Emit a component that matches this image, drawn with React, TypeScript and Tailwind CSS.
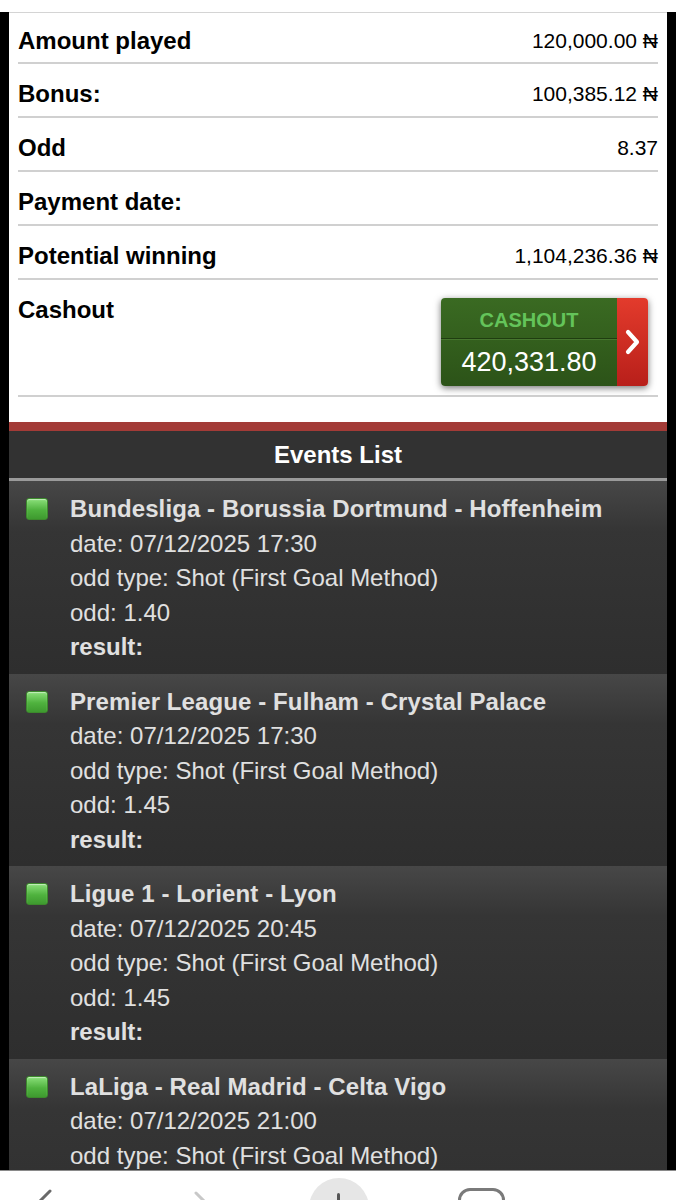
import React from "react";

const font = { fontFamily: '"Liberation Sans", Arial, Helvetica, sans-serif' };

type Row = { label: string; value: string };
const rows: Row[] = [
  { label: "Amount played", value: "120,000.00 ₦" },
  { label: "Bonus:", value: "100,385.12 ₦" },
  { label: "Odd", value: "8.37" },
  { label: "Payment date:", value: "" },
  { label: "Potential winning", value: "1,104,236.36 ₦" },
];

const events = [
  { title: "Bundesliga - Borussia Dortmund - Hoffenheim", date: "07/12/2025 17:30", odd: "1.40" },
  { title: "Premier League - Fulham - Crystal Palace", date: "07/12/2025 17:30", odd: "1.45" },
  { title: "Ligue 1 - Lorient - Lyon", date: "07/12/2025 20:45", odd: "1.45" },
  { title: "LaLiga - Real Madrid - Celta Vigo", date: "07/12/2025 21:00", odd: "1.45" },
];

function CashoutButton() {
  return (
    <div className="flex h-[88px] w-[207px] rounded-[4px] overflow-hidden shadow-[0_2px_7px_rgba(0,0,0,0.55)]">
      <div className="flex w-[176px] flex-col bg-[linear-gradient(to_bottom,#3a6a22,#2c5318)]">
        <div className="flex h-[41px] items-center justify-center border-b border-[#1f3d10] text-[20px] font-bold text-[#64c45a] leading-none pt-[4px]">
          CASHOUT
        </div>
        <div className="flex flex-1 items-center justify-center border-t border-[#46762e] text-[27px] text-white leading-none pb-[2px]">
          420,331.80
        </div>
      </div>
      <div className="flex flex-1 items-center justify-center bg-[linear-gradient(to_bottom,#e33b2c,#b81f1a)]">
        <svg width="18" height="26" viewBox="0 0 18 26">
          <path d="M4 3 L13 13 L4 23" fill="none" stroke="#fff" strokeWidth="4.2" strokeLinecap="round" strokeLinejoin="round" />
        </svg>
      </div>
    </div>
  );
}

function EventItem({ title, date, odd }: { title: string; date: string; odd: string }) {
  return (
    <div className="flex bg-[linear-gradient(to_bottom,#474747_0px,#353535_50px,#2e2e2e_100%)] pt-[11px] pb-[9px] text-[24px] leading-[34.5px] text-[#e0e0e0]">
      <div className="w-[61px] shrink-0 pl-[17px] pt-[6px]">
        <div className="h-[22px] w-[22px] rounded-[3px] border border-[#3c8a2c] bg-[linear-gradient(to_bottom,#8be07a,#4fb23e_55%,#3e9a2f)] shadow-[inset_0_1px_1px_rgba(255,255,255,0.5)]" />
      </div>
      <div className="flex flex-col">
        <div className="font-bold tracking-[0.1px]">{title}</div>
        <div>date: {date}</div>
        <div>odd type: Shot (First Goal Method)</div>
        <div>odd: {odd}</div>
        <div className="font-bold">result:</div>
      </div>
    </div>
  );
}

export default function App() {
  return (
    <div className="flex h-[1200px] w-[676px] flex-col overflow-hidden bg-black" style={font}>
      <div className="h-[12px] shrink-0 bg-white" />
      <div className="flex min-h-0 flex-1 flex-col overflow-hidden px-[9px] pr-[9px]">
        <div className="bg-white border-t border-[#d4d4d4] px-[9px] text-black">
          {rows.map((r, i) => (
            <div
              key={r.label}
              className={`flex justify-between border-b-2 border-[#d0d0d0] ${i === 0 ? "h-[51px] pt-[14px]" : "h-[54px] pt-[16px]"}`}
            >
              <div className="h-[28px] text-[24px] font-bold leading-[28px]">{r.label}</div>
              <div className="h-[28px] text-[21px] leading-[28px]">{r.value}</div>
            </div>
          ))}
          <div className="flex h-[117px] justify-between border-b-2 border-[#d0d0d0] pt-[16px]">
            <div className="h-[28px] text-[24px] font-bold leading-[28px]">Cashout</div>
            <div className="mr-[10px] mt-[2px]">
              <CashoutButton />
            </div>
          </div>
          <div className="h-[25px]" />
        </div>
        <div className="h-[9px] shrink-0 bg-[#a33b37]" />
        <div className="flex h-[47px] shrink-0 items-center justify-center bg-[#323232] text-[24px] font-bold text-white">
          Events List
        </div>
        <div className="h-[3px] shrink-0 bg-[#9a9a9a]" />
        <div className="flex flex-col bg-[#2e2e2e]">
          {events.map((e) => (
            <EventItem key={e.title} {...e} />
          ))}
        </div>
      </div>
      <div className="relative h-[30px] shrink-0 overflow-hidden border-t border-[#8a8a8a] bg-white">
        <svg className="absolute left-[34px] top-[18px]" width="20" height="20" viewBox="0 0 20 20">
          <path d="M16 2 L6 12" fill="none" stroke="#6a6a6a" strokeWidth="3" strokeLinecap="round" />
        </svg>
        <svg className="absolute left-[192px] top-[20px]" width="20" height="20" viewBox="0 0 20 20">
          <path d="M4 2 L14 12" fill="none" stroke="#c8c8c8" strokeWidth="3" strokeLinecap="round" />
        </svg>
        <div className="absolute left-[309px] top-[7px] h-[60px] w-[60px] rounded-full bg-[#e6e6e6]" />
        <div className="absolute left-[337px] top-[22px] h-[20px] w-[3px] rounded bg-[#555]" />
        <div className="absolute left-[458px] top-[17px] h-[40px] w-[47px] rounded-[12px] border-[3px] border-[#7a7a7a]" />
      </div>
    </div>
  );
}
